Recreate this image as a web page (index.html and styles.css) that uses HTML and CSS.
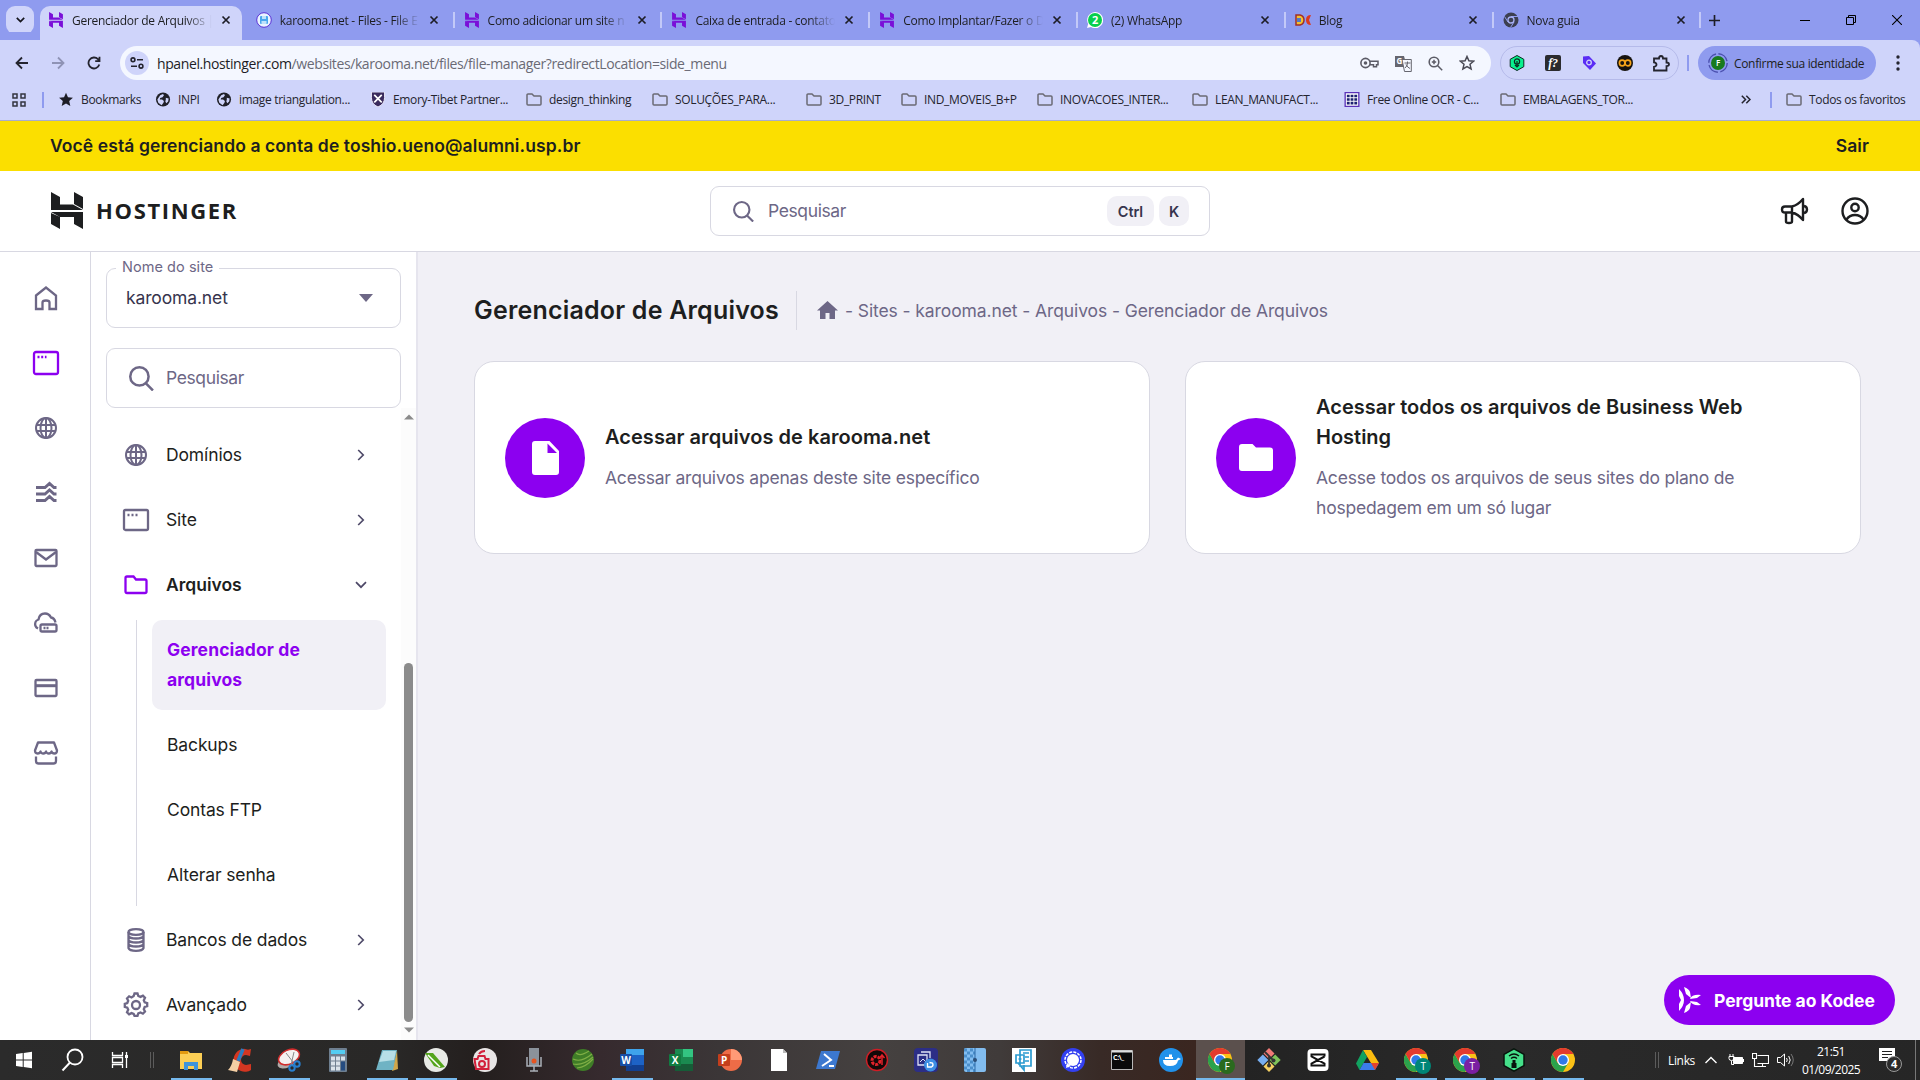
FILE: index.html
```html
<!DOCTYPE html>
<html lang="pt-BR">
<head>
<meta charset="utf-8">
<title>Gerenciador de Arquivos</title>
<link rel="stylesheet" href="styles.css">
</head>
<body>
<svg class="defs" aria-hidden="true">
  <symbol id="x" viewBox="0 0 10 10"><path d="M1.5 1.5l7 7M8.500 1.500l-7 7" stroke="currentColor" stroke-width="1.7" fill="none"/></symbol>
  <symbol id="hlogo" viewBox="0 0 32 37"><path fill="currentColor" d="M0 0l9 5v7.500h13L32 18H0zM23 0l9 5v12l-9-5zM0 21l9 4v12l-9-5zM0 20h32v17l-9-5v-7H9z"/></symbol>
  <symbol id="folder" viewBox="0 0 16 14"><path d="M1 2.500a1 1 0 0 1 1-1h4l2 2h6a1 1 0 0 1 1 1v7a1 1 0 0 1-1 1H2a1 1 0 0 1-1-1z" fill="none" stroke="#6b6a74" stroke-width="1.500"/></symbol>
  <symbol id="earth" viewBox="0 0 16 16"><circle cx="8" cy="8" r="7.500" fill="#202028"/><path d="M5 3.500l3-1.500 1 1.500-1.500 2L5 6.500 4.500 8H7l2 1.500-.5 2-2 2.500L3 11.500 2 8zM11 6l3 1-.5 3-2 2-1-2 .5-2z" fill="#cfd4fa"/></symbol>
  <symbol id="globe" viewBox="0 0 24 24"><g fill="none" stroke="currentColor" stroke-width="2"><circle cx="12" cy="12" r="10"/><ellipse cx="12" cy="12" rx="5.500" ry="10"/><path d="M12 2v20M2.500 9h19M2.500 15h19"/></g></symbol>
  <symbol id="search" viewBox="0 0 24 24"><g fill="none" stroke="currentColor" stroke-width="2.400"><circle cx="10" cy="10" r="8.800"/><path d="M16 16.500l7 7"/></g></symbol>
  <symbol id="chev" viewBox="0 0 8 12"><path d="M1.200 1l5 5-5 5" fill="none" stroke="currentColor" stroke-width="1.700"/></symbol>
  <symbol id="chrome" viewBox="0 0 24 24"><circle cx="12" cy="12" r="12" fill="#fbc116"/><path d="M1.600 6A12 12 0 0 0 12 24l5.200-9L12 12 6.800 15z" fill="#2ba24c"/><path d="M12 6h10.400A12 12 0 0 0 1.600 6l5.200 9z" fill="#e33b2e"/><circle cx="12" cy="12" r="6" fill="#fff"/><circle cx="12" cy="12" r="4.700" fill="#3079e8"/></symbol>
</svg>

<div class="tabs">
  <div class="tab-search"><svg width="9" height="6" viewBox="0 0 9 6"><path d="M.8.8l3.700 3.700L8.200.8" fill="none" stroke="#15151c" stroke-width="1.700"/></svg></div>
  <div class="tab active"><svg class="fav purple"><use href="#hlogo"/></svg><span>Gerenciador de Arquivos |</span><svg class="close"><use href="#x"/></svg></div>
  <div class="tab"><svg class="fav" viewBox="0 0 16 16"><circle cx="8" cy="8" r="7.300" fill="#e9f4ff" stroke="#5b32d6" stroke-width="1"/><rect x="4" y="4" width="8" height="8" rx="1" fill="#4aa8ee"/><path d="M6 4h4v3H6zM5.500 9h5v3h-5z" fill="#bfe2fb"/></svg><span>karooma.net - Files - File E</span><svg class="close"><use href="#x"/></svg></div>
  <div class="tab"><svg class="fav purple"><use href="#hlogo"/></svg><span>Como adicionar um site n</span><svg class="close"><use href="#x"/></svg></div>
  <div class="tab"><svg class="fav purple"><use href="#hlogo"/></svg><span>Caixa de entrada - contato</span><svg class="close"><use href="#x"/></svg></div>
  <div class="tab"><svg class="fav purple"><use href="#hlogo"/></svg><span>Como Implantar/Fazer o D</span><svg class="close"><use href="#x"/></svg></div>
  <div class="tab"><svg class="fav" viewBox="0 0 16 16"><path d="M0 16l1.200-4A8 8 0 1 1 4 14.900z" fill="#fff"/><circle cx="8" cy="8" r="7" fill="#07cf4c"/><text x="8" y="12" font-size="11" font-weight="700" text-anchor="middle" fill="#fff">2</text></svg><span>(2) WhatsApp</span><svg class="close"><use href="#x"/></svg></div>
  <div class="tab"><svg class="fav" viewBox="0 0 16 16"><path d="M1 3h4q4 1 4 5t-4 5H1z" fill="#f2c230" stroke="#a02f2a" stroke-width="1.500"/><path d="M2 6h4v4H2z" fill="#5577c8"/><path d="M16 3q-5 0-5 5t5 5l-2-5z" fill="#d93a22"/></svg><span>Blog</span><svg class="close"><use href="#x"/></svg></div>
  <div class="tab"><svg class="fav" viewBox="0 0 16 16"><circle cx="8" cy="8" r="7.500" fill="#3c3f50"/><path d="M8 4.500h7M5 10L1.500 4.500M11 10l-3.500 5.500" stroke="#8f9bef" stroke-width="1"/><circle cx="8" cy="8" r="3" fill="#3c3f50" stroke="#aab3f5" stroke-width="1.300"/></svg><span>Nova guia</span><svg class="close"><use href="#x"/></svg></div>
  <svg class="plus" viewBox="0 0 12 12"><path d="M6 0v12M0 6h12" stroke="#1d1d26" stroke-width="1.800"/></svg>
  <div class="winbtns">
    <svg width="10" height="10"><path d="M0 5.500h10" stroke="#000"/></svg>
    <svg width="10" height="10"><path d="M.5 2.500h7v7h-7zM2.500 2V.5h7v7H8" fill="none" stroke="#000"/></svg>
    <svg width="10" height="10"><path d="M0 0l10 10M10 0L0 10" stroke="#000" stroke-width="1.100"/></svg>
  </div>
</div>

<div class="toolbar">
  <div class="nav">
    <svg width="14" height="14" viewBox="0 0 14 14"><path d="M13 7H2M7 1.500L1.500 7 7 12.500" fill="none" stroke="#24242e" stroke-width="1.800"/></svg>
    <svg width="14" height="14" viewBox="0 0 14 14"><path d="M1 7h11M7 1.500L12.500 7 7 12.500" fill="none" stroke="#8f93b5" stroke-width="1.800"/></svg>
    <svg width="14" height="14" viewBox="0 0 14 14"><path d="M12.300 8.500A5.500 5.500 0 1 1 11 3.200l1 1.300M12.500.8v4.400H8.200" fill="none" stroke="#24242e" stroke-width="1.800"/></svg>
  </div>
  <div class="omnibox">
    <div class="siteinfo"><svg width="14" height="12" viewBox="0 0 14 12"><g fill="none" stroke="#24242e" stroke-width="1.600"><circle cx="3" cy="2.800" r="1.900"/><path d="M7 2.800h6M1 9.200h6"/><circle cx="11" cy="9.200" r="1.900"/></g></svg></div>
    <div class="url"><b>hpanel.hostinger.com</b>/websites/karooma.net/files/file-manager?redirectLocation=side_menu</div>
    <svg width="19" height="14" viewBox="0 0 19 14"><circle cx="5.500" cy="7" r="4.600" fill="none" stroke="#5b5b66" stroke-width="1.600"/><circle cx="5.500" cy="7" r="1.800" fill="#5b5b66"/><path d="M10 5.200h8v3.500h-1.500v2h-3v-2H10" fill="none" stroke="#5b5b66" stroke-width="1.500"/></svg>
    <svg width="17" height="17" viewBox="0 0 17 17"><path d="M0 1h9l3 11H0z" fill="#66666f"/><path d="M7 4.500h9.300v12H9.500z" fill="#f4f7ff" stroke="#66666f"/><text x="1.500" y="9" font-size="8" font-weight="700" fill="#fff">G</text><path d="M9.500 8h6M12.500 6.500V8q0 3-2.500 5M11 9.500q1.500 3 4 4" fill="none" stroke="#66666f"/></svg>
    <svg width="15" height="15" viewBox="0 0 15 15"><circle cx="6" cy="6" r="4.800" fill="none" stroke="#5b5b66" stroke-width="1.600"/><path d="M9.500 9.500l4.700 4.700M3.800 6h4.400M6 3.800v4.400" stroke="#5b5b66" stroke-width="1.500"/></svg>
    <svg width="16" height="16" viewBox="0 0 16 16"><path d="M8 1.500l1.900 4.300 4.700.4-3.600 3.100 1.100 4.600L8 11.500l-4.100 2.400L5 9.300 1.400 6.200l4.700-.4z" fill="none" stroke="#4a4a55" stroke-width="1.500"/></svg>
  </div>
  <div class="exts">
    <svg width="16" height="16" viewBox="0 0 16 16"><path d="M8 .5l6.800 3.800v7.400L8 15.500 1.200 11.700V4.300z" fill="#08f08f" stroke="#0b2a20"/><circle cx="8" cy="6.500" r="2.600" fill="none" stroke="#0b2a20" stroke-width="1.200"/><path d="M8 6v6M6 10l2 2 2-2" stroke="#0b2a20" stroke-width="1.200" fill="none"/></svg>
    <svg width="16" height="16" viewBox="0 0 16 16"><rect width="16" height="16" rx="2" fill="#2b2b2e"/><text x="8" y="12" font-size="12" font-weight="700" font-style="italic" text-anchor="middle" fill="#fff" class="serif">f?</text></svg>
    <svg width="16" height="16" viewBox="0 0 16 16"><path d="M2 1.500l6-.5 7 7.500-6 6.500L2 8z" fill="#5b2cf5"/><circle cx="8" cy="7.500" r="2.300" fill="none" stroke="#cfd4fa" stroke-width="1.300"/></svg>
    <svg width="16" height="16" viewBox="0 0 16 16"><circle cx="8" cy="8" r="8" fill="#17130f"/><circle cx="5.200" cy="8" r="2.800" fill="none" stroke="#f5a31a" stroke-width="1.700"/><circle cx="10.800" cy="8" r="2.800" fill="none" stroke="#f5a31a" stroke-width="1.700"/></svg>
    <svg width="17" height="17" viewBox="0 0 17 17"><path d="M1 3.500h5q0-2.500 2-2.500t2 2.500h3.500v4q2.500 0 2.500 1.800t-2.500 1.800V15.500H1v-3.700q2.500-.3 2.500-2.200T1 7.400z" fill="none" stroke="#24242e" stroke-width="1.800"/></svg>
  </div>
  <i class="vsep"></i>
  <div class="profile"><svg width="20" height="20" viewBox="0 0 20 20"><circle cx="10" cy="10" r="9.200" fill="none" stroke="#4a4fae" stroke-width="1.400" stroke-dasharray="12 2.500"/><circle cx="10" cy="10" r="7" fill="#187a1e"/><text x="10" y="13" font-size="8" font-weight="600" text-anchor="middle" fill="#fff">F</text></svg><span>Confirme sua identidade</span></div>
  <svg class="dots" width="4" height="16"><circle cx="2" cy="2" r="1.700"/><circle cx="2" cy="8" r="1.700"/><circle cx="2" cy="14" r="1.700"/></svg>
</div>

<div class="bookmarks">
  <svg class="apps" width="14" height="14" viewBox="0 0 14 14"><path d="M1 1h4v4H1zM9 1h4v4H9zM1 9h4v4H1zM9 9h4v4H9z" fill="none" stroke="#35353f" stroke-width="1.500"/></svg>
  <i class="vsep"></i>
  <div class="bm"><svg viewBox="0 0 16 16"><path d="M8 .8l2.100 4.900 5.300.5-4 3.500 1.200 5.200L8 12.200l-4.600 2.700 1.200-5.200-4-3.500 5.300-.5z" fill="#1d1d26"/></svg><span>Bookmarks</span></div>
  <div class="bm"><svg><use href="#earth"/></svg><span>INPI</span></div>
  <div class="bm"><svg><use href="#earth"/></svg><span>image triangulation...</span></div>
  <div class="bm"><svg viewBox="0 0 16 16"><path d="M1 0h14v6q0 7-7 10Q1 13 1 6z" fill="#3a2a5d" stroke="#efeefc"/><path d="M4 3l8 8M12 3l-8 8" stroke="#fff" stroke-width="1.800"/></svg><span>Emory-Tibet Partner...</span></div>
  <div class="bm"><svg><use href="#folder"/></svg><span>design_thinking</span></div>
  <div class="bm"><svg><use href="#folder"/></svg><span>SOLUÇÕES_PARA...</span></div>
  <div class="bm"><svg><use href="#folder"/></svg><span>3D_PRINT</span></div>
  <div class="bm"><svg><use href="#folder"/></svg><span>IND_MOVEIS_B+P</span></div>
  <div class="bm"><svg><use href="#folder"/></svg><span>INOVACOES_INTER...</span></div>
  <div class="bm"><svg><use href="#folder"/></svg><span>LEAN_MANUFACT...</span></div>
  <div class="bm"><svg viewBox="0 0 16 16"><path d="M.7.700h14.600v14.600H.7z" fill="#fff" stroke="#5a32b8" stroke-width="1.400"/><path d="M2.500 4.200h11M2.500 8h11M2.500 11.800h11" stroke="#1c2170" stroke-width="2.800" stroke-dasharray="3 1"/></svg><span>Free Online OCR - C...</span></div>
  <div class="bm"><svg><use href="#folder"/></svg><span>EMBALAGENS_TOR...</span></div>
  <svg class="more" width="10" height="9" viewBox="0 0 10 9"><path d="M.8.800l3.700 3.700L.8 8.200M5.300.800L9 4.500 5.300 8.200" fill="none" stroke="#24242e" stroke-width="1.500"/></svg>
  <i class="vsep"></i>
  <div class="bm"><svg><use href="#folder"/></svg><span>Todos os favoritos</span></div>
</div>

<div class="banner"><span>Você está gerenciando a conta de toshio.ueno@alumni.usp.br</span><span>Sair</span></div>

<header class="header">
  <div class="brand"><svg width="32" height="37"><use href="#hlogo"/></svg><span>HOSTINGER</span></div>
  <div class="hsearch"><svg width="21" height="21"><use href="#search"/></svg><span>Pesquisar</span><kbd>Ctrl</kbd><kbd>K</kbd></div>
  <div class="hicons">
    <svg width="29" height="28" viewBox="0 0 29 28"><g fill="none" stroke="#1d1e20" stroke-width="2.400" stroke-linejoin="round"><path d="M5 9.500h7q6-1.500 11-7.500v21q-5-6-11-7.500H5q-3 0-3-3t3-3zM12 9.500v6M6 16v8.500q0 1.500 3 1.500t3-1.500V16"/><path d="M24 9q3 .5 3 3.500T24 16"/></g></svg>
    <svg width="28" height="28" viewBox="0 0 28 28"><g fill="none" stroke="#1d1e20" stroke-width="2.400"><circle cx="14" cy="14" r="12.500"/><circle cx="14" cy="10.500" r="3.700"/><path d="M5.500 22.500q3-4.500 8.500-4.500t8.500 4.500"/></g></svg>
  </div>
</header>

<div class="app">
  <nav class="rail">
    <svg viewBox="0 0 24 24"><path d="M2 9.500L12 1.500l10 8V23h-6.500v-6.500q0-2-3.500-2t-3.500 2V23H2z"/></svg>
    <svg class="on" viewBox="0 0 24 24"><rect x="0" y="1" width="24" height="22" rx="2"/><path d="M3.500 6h9" stroke-dasharray="2 1.700"/></svg>
    <svg viewBox="0 0 24 24"><use href="#globe"/></svg>
    <svg viewBox="0 0 24 24"><path d="M2 6.500h9l4.500-4 4.500 4h2.500M2 13h9l4.500-4 4.500 4h2.500M2 19.500h9l4.500-4 4.500 4h2.500" stroke-width="3"/></svg>
    <svg viewBox="0 0 24 24"><rect x="1.500" y="4" width="21" height="16" rx="1"/><path d="M2 6l10 7.500L22 6"/></svg>
    <svg viewBox="0 0 24 24"><path d="M4 17.500Q0 15.500 1.500 11q.5-1.500 3-2.500Q5.500 2.500 11 2.500q4 0 6 4 3.500.5 4.500 5"/><rect x="6.500" y="13.500" width="16" height="7" rx="1.500"/><path d="M9.500 17h5" stroke-dasharray="2 1"/></svg>
    <svg viewBox="0 0 24 24"><rect x="1.500" y="4" width="21" height="16" rx="1"/><path d="M2 9.700h20" stroke-width="3"/></svg>
    <svg viewBox="0 0 24 24"><path d="M4 1.500h16l3 8q0 3-2.500 3t-3-2q-.5 2-2.700 2t-2.800-2q-.5 2-2.700 2t-2.800-2q-.5 2-3 2T1 9.500zM2 15.500v4.500q0 2.500 2.500 2.500h15q2.500 0 2.500-2.500v-4.500" stroke-linejoin="round"/></svg>
  </nav>

  <aside class="side">
    <div class="select"><span class="label">Nome do site</span><span>karooma.net</span><svg width="14" height="8"><path d="M0 0h14L7 8z" fill="#6d6786"/></svg></div>
    <div class="ssearch"><svg width="25" height="25"><use href="#search"/></svg><span>Pesquisar</span></div>
    <div class="scroll">
      <div class="menu">
        <div class="item"><svg viewBox="0 0 24 24"><use href="#globe"/></svg><span>Domínios</span><svg class="chev"><use href="#chev"/></svg></div>
        <div class="item"><svg viewBox="0 0 24 24"><rect x="0" y="2" width="24" height="20" rx="1.500"/><path d="M3.500 7h10" stroke-dasharray="2 2"/></svg><span>Site</span><svg class="chev"><use href="#chev"/></svg></div>
        <div class="item open"><svg viewBox="0 0 24 24"><path d="M1.500 5q0-1.500 1.500-1.500h6.500l2.500 3h9q1.500 0 1.500 1.500v10.500q0 1.500-1.500 1.500H3q-1.500 0-1.500-1.500z"/></svg><span>Arquivos</span><svg class="chev down"><use href="#chev"/></svg></div>
        <div class="sub">
          <a class="current">Gerenciador de arquivos</a><a>Backups</a><a>Contas FTP</a><a>Alterar senha</a>
        </div>
        <div class="item"><svg viewBox="0 0 24 24"><ellipse cx="12" cy="4" rx="7.500" ry="2.800"/><path d="M4.500 4v16q1 2.800 7.500 2.800t7.500-2.800V4M4.500 8q1 2.500 7.500 2.500T19.500 8M4.500 12q1 2.500 7.500 2.500t7.500-2.500M4.500 16q1 2.500 7.500 2.500t7.500-2.500"/></svg><span>Bancos de dados</span><svg class="chev"><use href="#chev"/></svg></div>
        <div class="item"><svg viewBox="0 0 24 24"><path d="M9.700 3L10.500.5h3l.8 2.500 2.200.9 2.400-1.200 2.100 2.100-1.200 2.400.9 2.200 2.500.8v3l-2.500.8-.9 2.200 1.200 2.400-2.100 2.100-2.400-1.200-2.200.9-.8 2.500h-3L9.700 21l-2.200-.9-2.400 1.200L3 19.200l1.200-2.400-.9-2.200-2.500-.8v-3l2.500-.8.9-2.200L3 5.400l2.100-2.100 2.400 1.200z"/><circle cx="12" cy="12" r="4"/></svg><span>Avançado</span><svg class="chev"><use href="#chev"/></svg></div>
      </div>
      <div class="track"><svg width="10" height="6"><path d="M0 5.500L5 .5l5 5z"/></svg><i></i><svg width="10" height="6"><path d="M0 .5l5 5 5-5z"/></svg></div>
    </div>
  </aside>

  <main class="main">
    <div class="titlebar">
      <h1>Gerenciador de Arquivos</h1>
      <div class="crumbs"><svg width="21" height="18" viewBox="0 0 21 18"><path d="M10.500 0L21 9.500h-3V18h-5.500v-6h-4v6H3V9.500H0z" fill="#6d6786"/></svg><span>- Sites - karooma.net - Arquivos - Gerenciador de Arquivos</span></div>
    </div>
    <div class="cards">
      <section class="card"><div class="disc"><svg width="27" height="34" viewBox="0 0 27 34"><path fill="#fff" fill-rule="evenodd" d="M3 0h14.500L27 10v21q0 3-3 3H3q-3 0-3-3V3q0-3 3-3zM15.500 2.500V12H25z"/></svg></div><div><h2>Acessar arquivos de karooma.net</h2><p>Acessar arquivos apenas deste site específico</p></div></section>
      <section class="card"><div class="disc"><svg width="34" height="27" viewBox="0 0 34 27"><path fill="#fff" d="M3 0h10.500l3.500 3.400h14q3 0 3 3V24q0 3-3 3H3q-3 0-3-3V3q0-3 3-3z"/></svg></div><div><h2 class="long">Acessar todos os arquivos de Business Web Hosting</h2><p class="long">Acesse todos os arquivos de seus sites do plano de hospedagem em um só lugar</p></div></section>
    </div>
    <button class="kodee"><svg width="24" height="26" viewBox="0 0 24 26"><path fill="#fff" d="M1 2q5 5 5 11T1 24V17l2-4-2-4zM6 0q5 2 6 5l1 6-5-4zM6 26q5-2 6-5l1-6-5 4zM12 12q2-5 11-4l-4 3zM12 14q2 5 11 4l-4-3z"/></svg><span>Pergunte ao Kodee</span></button>
  </main>
</div>

<footer class="taskbar">
  <div class="tk"><svg viewBox="0 0 24 24"><path d="M4 6l6.700-1v6.500H4zM11.700 4.900L20 3.700v7.800h-8.300zM4 12.500h6.700V19L4 18zM11.700 12.500H20v7.800l-8.300-1.200z" fill="#fff"/></svg></div>
  <div class="tk"><svg viewBox="0 0 24 24"><circle cx="14" cy="9" r="7.500" fill="none" stroke="#fff" stroke-width="1.800"/><path d="M9 14.500L1.500 22.500" stroke="#fff" stroke-width="2"/></svg></div>
  <div class="tk view"><svg viewBox="0 0 24 24"><path d="M4.500 4v3.500h10V4M4.500 20v-3.500h10V20M4.500 9.500h10v5h-10zM18.500 4v16" fill="none" stroke="#fff" stroke-width="1.300"/><path d="M17 7h3v3h-3z" fill="#fff"/></svg></div>
  <i class="grip"></i>
  <div class="tk run"><svg viewBox="0 0 24 24"><path d="M1 3h8l2 2h12v16H1z" fill="#fccf55"/><path d="M1 3h8v3H1z" fill="#e39b10"/><path d="M5 22v-8h14v8h-4v-4H9v4z" fill="#3f94da"/></svg></div>
  <div class="tk"><svg viewBox="0 0 24 24"><path d="M23 1l-1 7-4-1a5 5 0 1 0 0 10l5-1v6A11.500 11.500 0 1 1 16 .8l4 1z" fill="#d43621"/><path d="M15 1l-5 12" stroke="#2b7cc0" stroke-width="3.500"/><path d="M5 11l7 3-3 10-9-2q4-4 5-11z" fill="#f4cfa4"/></svg></div>
  <div class="tk run"><svg viewBox="0 0 24 24"><ellipse cx="10" cy="14" rx="10" ry="5.500" fill="#b0aaa8" transform="rotate(-25 10 14)"/><ellipse cx="12" cy="9" rx="11" ry="7" fill="#f4f1f0" stroke="#d02d2d" stroke-width="1.500" transform="rotate(-25 12 9)"/><path d="M9 5l7 9M17 4l-3 13" stroke="#888"/><circle cx="15" cy="20" r="2.700" fill="none" stroke="#287fce" stroke-width="2"/><circle cx="20" cy="16" r="2.700" fill="none" stroke="#287fce" stroke-width="2"/></svg></div>
  <div class="tk"><svg viewBox="0 0 24 24"><rect x="3" y="0" width="18" height="24" rx="1" fill="#6e7f90"/><path d="M5 2h14v4H5z" fill="#53cdf2"/><path d="M5 10.500h9M5 15.500h9M5 20.500h9" stroke="#d9e2ea" stroke-width="4" stroke-dasharray="4 1"/><path d="M15 13.500h4v9h-4z" fill="#254c80"/><path d="M15 8.500h4v4h-4z" fill="#d9e2ea"/></svg></div>
  <div class="tk run"><svg viewBox="0 0 24 24"><path d="M22 2l1 19-6 2z" fill="#cfa64c"/><path d="M7 2h15l-4 20H1z" fill="#6fb3c4"/><path d="M8 3h13l-2 9L4 14z" fill="#b7dfe7"/></svg></div>
  <div class="tk run"><svg viewBox="0 0 24 24"><circle cx="12" cy="12" r="12" fill="#e8eae6"/><path d="M1 5h8l12 14-5 1-6-2z" fill="#53a51b"/><path d="M4 7l12 12" stroke="#fff" stroke-width="1.500"/></svg></div>
  <div class="tk"><svg viewBox="0 0 24 24"><circle cx="12" cy="12" r="12" fill="#e8e5e5"/><path d="M1.500 11h3l1-3h6l1 3h3v10H3zM6 6q2-3 6-3" fill="none" stroke="#d2203b" stroke-width="2"/><circle cx="9" cy="16" r="3" fill="none" stroke="#d2203b" stroke-width="2"/></svg></div>
  <div class="tk"><svg viewBox="0 0 24 24"><path d="M7 0h10v18H7z" fill="#8b929b"/><path d="M5 9v9h14V9M12 18v5M8 23h8" fill="none" stroke="#aab0b8" stroke-width="1.500"/><circle cx="12" cy="13" r="2.500" fill="#e65420"/></svg></div>
  <div class="tk"><svg viewBox="0 0 24 24"><circle cx="12" cy="12" r="11" fill="#3f7d27"/><path d="M5 5q4 4 13-2M2 11q8 4 19-5M2 16q10 2 20-7M6 20q9-1 16-9" fill="none" stroke="#7fae45" stroke-width="1.200"/></svg></div>
  <div class="tk run"><svg viewBox="0 0 24 24"><path d="M6 1h18v22H6z" fill="#1d62c5"/><path d="M6 1h18v6H6z" fill="#3fa4ec"/><path d="M6 17h18v6H6z" fill="#123f8f"/><rect y="6" width="12" height="12" rx="1" fill="#174ea6"/><text x="6" y="15.500" font-size="10" font-weight="700" text-anchor="middle" fill="#fff">W</text></svg></div>
  <div class="tk"><svg viewBox="0 0 24 24"><path d="M6 1h18v22H6z" fill="#1a8a50"/><path d="M14 1h10v8H14z" fill="#33c481"/><path d="M6 16h18v7H6z" fill="#165c37"/><rect y="6" width="12" height="12" rx="1" fill="#107c41"/><text x="6" y="15.500" font-size="10" font-weight="700" text-anchor="middle" fill="#fff">X</text></svg></div>
  <div class="tk"><svg viewBox="0 0 24 24"><circle cx="13" cy="12" r="11" fill="#ed6c47"/><path d="M13 1a11 11 0 0 1 11 11H13z" fill="#ff9a76"/><rect y="6" width="12" height="12" rx="1" fill="#c43e1c"/><text x="6" y="15.500" font-size="10" font-weight="700" text-anchor="middle" fill="#fff">P</text></svg></div>
  <div class="tk"><svg viewBox="0 0 24 24"><path d="M4 1h12l4 4v18H4z" fill="#fff"/><path d="M16 1v4h4z" fill="#bbb"/></svg></div>
  <div class="tk"><svg viewBox="0 0 24 24"><path d="M5 3h19l-5 18H0z" fill="#3c78cf"/><path d="M8 6l7 6-9 6M13 18h5" fill="none" stroke="#fff" stroke-width="2"/></svg></div>
  <div class="tk"><svg viewBox="0 0 24 24"><circle cx="12" cy="12" r="10.500" fill="#130808" stroke="#cf1d25" stroke-width="1.400"/><circle cx="11" cy="12.500" r="4" fill="none" stroke="#e0222a" stroke-width="3" stroke-dasharray="3 1"/><path d="M17 17V8M14.500 10L17 7l2.500 3" stroke="#e0222a" stroke-width="1.500" fill="none"/></svg></div>
  <div class="tk"><svg viewBox="0 0 24 24"><rect width="24" height="24" rx="4" fill="#2c2e86"/><path d="M4 7h9v10H4zM7 4h9v6" fill="none" stroke="#dfe2f6" stroke-width="1.300"/><path d="M6 14l3-3 3 3" stroke="#dfe2f6" fill="none"/><circle cx="16.500" cy="17" r="6.500" fill="#3d8ee4"/><path d="M13.500 15v4h4q2.500-1.500 1-4l-3-.5" fill="none" stroke="#fff" stroke-width="1.300"/></svg></div>
  <div class="tk"><svg viewBox="0 0 24 24"><rect x="1" width="22" height="24" rx="2" fill="#82bdf0"/><path d="M1 2h11M1 8h11M1 14h11M1 20h11" stroke="#4b8fcb" stroke-width="3" stroke-dasharray="3 3"/><path d="M4 5h8M4 11h8M4 17h8M4 22.500h8" stroke="#4b8fcb" stroke-width="3" stroke-dasharray="3 3"/><path d="M12 0v24" stroke="#2e6ba6"/><circle cx="12" cy="12" r="2" fill="#2c4f78"/></svg></div>
  <div class="tk"><svg viewBox="0 0 24 24"><path d="M0 0h24v24H0z" fill="#fff"/><path d="M8 2h11v16H8zM4 7h8v8H4zM6 15l6 7v-5M11 5h6M13 9h4M13 13h4M6.500 11h3" fill="none" stroke="#2b9bd0" stroke-width="1.700"/></svg></div>
  <div class="tk"><svg viewBox="0 0 24 24"><circle cx="12" cy="12" r="12" fill="#3340f0"/><circle cx="12" cy="12" r="6" fill="#fff"/><circle cx="12" cy="12" r="8" fill="none" stroke="#fff" stroke-width="1.500" stroke-dasharray="3 1.200"/><path d="M5 20l1-5 4 3z" fill="#fff"/></svg></div>
  <div class="tk"><svg viewBox="0 0 24 24"><path d="M1.500 2.500h21v19h-21z" fill="#0a0a0a" stroke="#b8b8b8"/><path d="M2 3.500h20" stroke="#ddd" stroke-width="2"/><text x="3" y="12" font-size="7" font-weight="700" fill="#fff">C:\_</text></svg></div>
  <div class="tk"><svg viewBox="0 0 24 24"><circle cx="12" cy="12" r="12" fill="#2191ea"/><path d="M4 12h13l2-2.500L22 11l-3 1.500Q18 18 11 18t-7-6zM6 9h8v2H6zM10 6.500h3V9h-3z" fill="#fff"/></svg></div>
  <div class="tk run focus"><svg viewBox="0 0 24 24"><use href="#chrome"/></svg><b class="badge green">F</b></div>
  <div class="tk"><svg viewBox="0 0 24 24"><path d="M12 0l5.500 5.500-5.500 5.500-5.500-5.500z" fill="#f07a77"/><path d="M5.800 6.500l5.500 5.500-5.500 5.500L.3 12z" fill="#78aef0"/><path d="M18.200 6.500l5.500 5.500-5.500 5.500-5.500-5.500z" fill="#7fc35a"/><path d="M12 13l5.500 5.500L12 24l-5.500-5.500z" fill="#f4cf62"/><path d="M8 4l8 8M12 8v10" stroke="#333" stroke-width="1.800"/><circle cx="12" cy="17.500" r="2" fill="#333"/><circle cx="16.500" cy="12.500" r="2" fill="#333"/></svg></div>
  <div class="tk"><svg viewBox="0 0 24 24"><rect x="1.500" y="1" width="21" height="22" rx="4" fill="#fff"/><path d="M18.500 8.500V6.500h-13v2l13 7v2h-13v-2l13-7" fill="none" stroke="#111" stroke-width="2"/></svg></div>
  <div class="tk"><svg viewBox="0 0 24 24"><path d="M8 2h8l8 13h-8z" fill="#fbbc10"/><path d="M8 2l4 7-7.500 13L1 15.500z" fill="#11a260"/><path d="M8.500 15H24l-4 7H4.500z" fill="#3b7cec"/><path d="M20 22l4-7h-8z" fill="#e4432e"/></svg></div>
  <div class="tk run"><svg viewBox="0 0 24 24"><use href="#chrome"/></svg><b class="badge teal">T</b></div>
  <div class="tk run"><svg viewBox="0 0 24 24"><use href="#chrome"/></svg><b class="badge violet">T</b></div>
  <div class="tk run"><svg viewBox="0 0 24 24"><path d="M12 .8l10 5.600v11.200L12 23.200 2 17.600V6.400z" fill="#45e08a" stroke="#07130c" stroke-width="1.500"/><path d="M7 8q5-4 10 0M9 10.500q3-2.500 6 0" fill="none" stroke="#07130c" stroke-width="1.300"/><path d="M9.500 15h5v5h-5zM10.500 15v-3h3v3" fill="#07130c"/></svg></div>
  <div class="tk run"><svg viewBox="0 0 24 24"><use href="#chrome"/></svg></div>
  <div class="tray">
    <i class="grip"></i><span class="links">Links</span>
    <svg class="up" width="12" height="8"><path d="M.5 7L6 1.500 11.500 7" fill="none" stroke="#fff" stroke-width="1.400"/></svg>
    <svg width="16" height="14"><path d="M5.500 4.500h9v6h-9z" fill="#fff" stroke="#fff"/><path d="M15.500 6v3M2 1v2M5 1v2M1 3.500h5v2q0 2-2.500 2T1 5.500zM3.500 8v3.500H6" fill="none" stroke="#fff"/></svg>
    <svg width="17" height="15"><path d="M5.500 2.500h11v8h-11M.5.500h4v5h-4zM2.500 6v7.500H14M10.500 11v3" fill="none" stroke="#fff" stroke-width="1.100"/></svg>
    <svg width="17" height="14"><path d="M.5 4.500h3l4-3.500v12l-4-3.500h-3zM9.500 5q1.500 2 0 4M11.700 3q3 4 0 8" fill="none" stroke="#fff"/><path d="M14 1q4.500 6 0 12" fill="none" stroke="#777"/></svg>
    <div class="clock">21:51<br>01/09/2025</div>
    <div class="notif"><svg width="16" height="17"><path d="M0 0h16v13h-5l-3 4v-4H0z" fill="#fff"/><path d="M3 3.500h10M3 6.500h10M3 9.500h6" stroke="#222"/></svg><b>4</b></div>
  </div>
</footer>
</body>
</html>
```
FILE: styles.css
```css
* { box-sizing: border-box; }
body {
  margin: 0;
  width: 1920px;
  height: 1080px;
  overflow: hidden;
  display: flex;
  flex-direction: column;
  font-family: Inter, "Liberation Sans", sans-serif;
  font-size: 17.5px;
  letter-spacing: -0.13px;
  color: #1d1e20;
  background: #fff;
}
svg { flex: none; display: block; }
.defs { position: absolute; width: 0; height: 0; }
.serif { font-family: "Liberation Serif", serif; }

/* browser chrome */
.tabs, .toolbar, .bookmarks, .taskbar {
  font-family: "Open Sans", "Noto Sans", sans-serif;
  font-size: 12px;
  letter-spacing: -0.33px;
}
.tabs {
  height: 40px;
  flex: none;
  display: flex;
  align-items: center;
  padding-left: 6px;
  background: #8f9bef;
}
.tab-search {
  width: 28px;
  height: 28px;
  margin-right: 6px;
  border-radius: 9px;
  background: #cfd4fa;
  display: grid;
  place-items: center;
}
.tab {
  width: 207.8px;
  height: 40px;
  flex: none;
  display: flex;
  align-items: center;
  padding-left: 8px;
  position: relative;
}
.tab::after {
  content: "";
  position: absolute;
  right: 1px;
  top: 12px;
  width: 2px;
  height: 16px;
  background: #c3c9f8;
}
.tab:nth-child(2)::after { display: none; }
.tab.active::before {
  content: "";
  position: absolute;
  z-index: 0;
  left: 0;
  top: 6px;
  width: 202px;
  height: 34px;
  border-radius: 10px 10px 0 0;
  background: #cfd4fa;
}
.tab > * { position: relative; z-index: 1; }
.fav { width: 16px; height: 16px; margin-right: 8px; }
.purple { color: #7a0fd8; }
.tab span {
  width: 141px;
  margin-right: 8px;
  white-space: nowrap;
  margin-top: 1px;
  letter-spacing: -0.27px;
  -webkit-mask-image: linear-gradient(90deg, #000 114px, transparent 140px);
  mask-image: linear-gradient(90deg, #000 114px, transparent 140px);
}
.close { width: 10px; height: 10px; color: #1d1d26; }
.plus { width: 11px; height: 11px; margin-left: 7px; }
.winbtns { display: flex; gap: 36px; margin-left: auto; padding-right: 18px; }

.toolbar {
  height: 43px;
  flex: none;
  display: flex;
  align-items: center;
  padding-top: 3px;
  background: #cfd4fa;
  border-top-right-radius: 8px;
  box-shadow: 8px -8px 0 #8f9bef;
}
.nav { display: flex; gap: 22px; width: 105px; padding-left: 15px; margin-right: 15px; }
.omnibox {
  width: 1371px;
  height: 34px;
  border-radius: 17px;
  background: #f4f7ff;
  display: flex;
  align-items: center;
  gap: 16px;
  padding: 0 16px 0 5px;
}
.siteinfo {
  width: 24px;
  height: 24px;
  border-radius: 50%;
  background: #cfd4fa;
  display: grid;
  place-items: center;
}
.url { flex: 1; font-size: 14px; letter-spacing: -0.39px; color: #6a6a75; margin-left: -8px; }
.url b { font-weight: 400; color: #1d1d26; }
.exts {
  width: 179px;
  height: 34px;
  margin-left: 9px;
  border: 1px solid #b5baea;
  border-radius: 17px;
  display: flex;
  align-items: center;
  gap: 20px;
  padding-left: 8px;
}
.vsep { width: 2px; height: 16px; background: #8f9bef; flex: none; }
.toolbar .vsep { margin: 0 9px 0 8px; }
.profile {
  width: 178px;
  height: 34px;
  border-radius: 17px;
  background: #8f9bef;
  display: flex;
  align-items: center;
  gap: 6px;
  padding-left: 10px;
  white-space: nowrap;
}
.dots { margin-left: 20px; fill: #24242e; }

.bookmarks {
  height: 38px;
  flex: none;
  display: grid;
  grid-template-columns: 30px 16px 97px 61px 154px 156px 126px 154px 95px 136px 155px 152px 156px 241px 29px 16px 140px;
  align-items: center;
  padding: 0 0 4px 12px;
  background: #cfd4fa;
  border-bottom: 1px solid #a9adcb;
  color: #24242e;
}
.bm { display: flex; align-items: center; gap: 7px; white-space: nowrap; }
.bm svg { width: 16px; height: 15px; }
.more { justify-self: start; }

/* account banner */
.banner {
  height: 50px;
  flex: none;
  display: flex;
  justify-content: space-between;
  align-items: center;
  padding: 0 51px 1px 50px;
  background: #fbdf00;
  font-weight: 600;
  letter-spacing: 0.09px;
}

/* site header */
.header {
  height: 81px;
  flex: none;
  display: grid;
  grid-template-columns: 659px 500px 1fr;
  align-items: center;
  padding: 0 51px;
  border-bottom: 1px solid #d8d8e2;
}
.brand { display: flex; align-items: center; gap: 13px; }
.brand svg { margin-top: -1px; }
.brand span { font-family: "Open Sans", sans-serif; font-weight: 700; font-size: 22px; line-height: 28px; letter-spacing: 1.65px; margin-top: -2px; }
.hsearch {
  height: 50px;
  border: 1px solid #d8d8e2;
  border-radius: 9px;
  display: flex;
  align-items: center;
  padding: 0 20px 0 22px;
  color: #6d6786;
}
.hsearch span { flex: 1; margin: -1px 0 0 14px; letter-spacing: -0.39px; }
kbd {
  font: 600 14.5px Inter, sans-serif;
  color: #36344d;
  background: #f1f0f6;
  border-radius: 10px;
  height: 30px;
  padding: 0 10px;
  margin-left: 5px;
  display: flex;
  align-items: center;
}
kbd:nth-of-type(1) { padding: 0 11px; }
.hicons { display: flex; justify-content: flex-end; gap: 32px; }

/* app layout */
.app { flex: 1; display: flex; min-height: 0; }
.rail {
  width: 91px;
  flex: none;
  border-right: 1px solid #d8d8e2;
  display: flex;
  flex-direction: column;
  align-items: center;
  padding: 34px 0 0 1px;
  gap: 41px;
}
.rail svg, .item > svg:first-child {
  width: 24px;
  height: 24px;
  fill: none;
  stroke: #6d6786;
  stroke-width: 2.300;
  color: #6d6786;
  overflow: visible;
}
.rail svg.on, .item.open > svg:first-child { stroke: #8c00f0; }
.side { width: 327px; flex: none; display: flex; flex-direction: column; padding-top: 16px; border-right: 2px solid #e6e5ee; }
.select, .ssearch {
  width: 295px;
  height: 60px;
  flex: none;
  margin-left: 15px;
  border: 1px solid #d8d8e2;
  border-radius: 9px;
  display: flex;
  align-items: center;
  position: relative;
  color: #36344d;
}
.select { justify-content: space-between; padding: 0 27px 1px 19px; }
.label {
  position: absolute;
  left: 9px;
  top: -12px;
  padding: 0 6px;
  line-height: 20px;
  font-size: 14.5px;
  letter-spacing: 0.05px;
  background: #fff;
  color: #6d6786;
}
.ssearch { margin-top: 20px; padding-left: 22px; gap: 12px; color: #6d6786; }
.ssearch span { letter-spacing: -0.39px; margin-top: -1px; }
.scroll { flex: 1; display: flex; min-height: 0; }
.menu { width: 310px; padding: 14px 15px 0 33px; }
.item { height: 65px; display: flex; align-items: center; }
.item span { margin-left: 18px; flex: 1; }
.item.open span { font-weight: 600; letter-spacing: 0; }
.item .chev { width: 8px; height: 12px; color: #4e4968; margin-right: 21px; }
.chev.down { transform: rotate(90deg); }
.sub {
  margin: 3px 0 1px 12px;
  padding-left: 15px;
  border-left: 1px solid #d8d8e2;
  height: 286px;
}
.sub a { display: flex; align-items: center; width: 234px; height: 65px; padding-left: 15px; }
.sub a.current {
  height: 90px;
  margin-bottom: 2px;
  padding-right: 60px;
  line-height: 30px;
  font-weight: 700;
  letter-spacing: 0.12px;
  color: #8c00f0;
  background: #f1f0f6;
  border-radius: 10px;
}
.track {
  width: 15px;
  background: #fcfcfc;
  display: flex;
  flex-direction: column;
  align-items: center;
  padding: 6px 0 7px;
  fill: #8b8b8b;
}
.track i { width: 9px; height: 359px; margin: auto 0 5px; border-radius: 5px; background: #8b8b8b; }

.main { flex: 1; background: #f1f0f6; padding: 39px 59px 0 56px; position: relative; }
.titlebar { display: flex; align-items: center; height: 39px; margin-bottom: 31px; }
h1, h2, p { margin: 0; }
h1 { font-size: 25px; font-weight: 600; letter-spacing: 0.2px; width: 323px; height: 39px; line-height: 39px; border-right: 1px solid #d8d8e2; white-space: nowrap; }
.crumbs { display: flex; align-items: center; gap: 7px; margin-left: 20px; color: #6d6786; letter-spacing: -0.1px; }
.crumbs svg { margin-top: -2px; }
.cards { display: grid; grid-template-columns: 1fr 1fr; gap: 35px; }
.card {
  height: 193px;
  background: #fff;
  border: 1px solid #d8d8e2;
  border-radius: 20px;
  display: flex;
  align-items: center;
  gap: 20px;
  padding: 0 30px;
}
.disc { width: 80px; height: 80px; flex: none; border-radius: 50%; background: #8c00f0; display: grid; place-items: center; }
h2 { font-size: 20px; font-weight: 600; line-height: 30px; letter-spacing: 0.05px; margin-bottom: 11px; }
p { line-height: 30px; color: #6d6786; letter-spacing: -0.2px; }
p.long { width: 450px; }
h2.long { width: 450px; letter-spacing: 0; }
.kodee {
  position: absolute;
  right: 25px;
  bottom: 15px;
  width: 231px;
  height: 50px;
  border: 0;
  border-radius: 25px;
  background: #8c00f0;
  color: #fff;
  font: 700 17.5px Inter, sans-serif;
  letter-spacing: -0.04px;
  white-space: nowrap;
  display: flex;
  align-items: center;
  gap: 12px;
  padding: 0 0 0 14px;
}

/* desktop taskbar */
.taskbar {
  height: 40px;
  flex: none;
  display: flex;
  align-items: center;
  color: #fff;
  background: linear-gradient(90deg, #2b2b2b 0, #292827 390px, #241f1e 480px, #362a2e 600px, #3b3637 720px, #454140 880px, #403b3a 1000px, #382a26 1100px, #3a2620 1195px, #232323 1245px, #2a2a2a 1500px, #262626 100%);
}
.tk { width: 49px; height: 40px; flex: none; display: grid; place-items: center; position: relative; padding-right: 1px; }
.tk.view { padding-right: 5px; }
.tk svg { width: 24px; height: 24px; }
.tk.run::after { content: ""; position: absolute; left: 4px; right: 4px; bottom: 0; height: 2px; background: #76b9ed; }
.tk.focus { background: #5b504d; }
.tk.focus::after { left: 0; right: 0; }
.grip { width: 4px; height: 16px; border: solid #5c5c5c; border-width: 0 1px; flex: none; }
.taskbar > .grip { margin: 0 13px 0 3px; }
.badge {
  position: absolute;
  left: 23px;
  top: 18px;
  width: 16px;
  height: 16px;
  border-radius: 50%;
  font: 400 10px/16px "Open Sans", sans-serif;
  text-align: center;
}
.green { background: #2a6a1e; }
.teal { background: #008577; }
.violet { background: #7b1fa2; }
.tray { margin-left: auto; display: flex; align-items: center; height: 40px; padding-right: 10px; border-right: 1px solid #777; margin-right: 4px; }
.tray > svg { margin-right: 8px; }
.tray > .up { margin-right: 11px; }
.links { margin: 0 10px 0 9px; }
.clock { width: 60px; text-align: center; line-height: 18px; letter-spacing: -0.55px; margin: 0 18px 0 -1px; padding-top: 1px; }
.notif { width: 26px; height: 24px; position: relative; }
.notif b {
  position: absolute;
  left: 7px;
  top: 8px;
  width: 16px;
  height: 16px;
  border: 1px solid #999;
  border-radius: 50%;
  background: #2b2b2b;
  font-size: 11px;
  line-height: 14px;
  text-align: center;
}
```
